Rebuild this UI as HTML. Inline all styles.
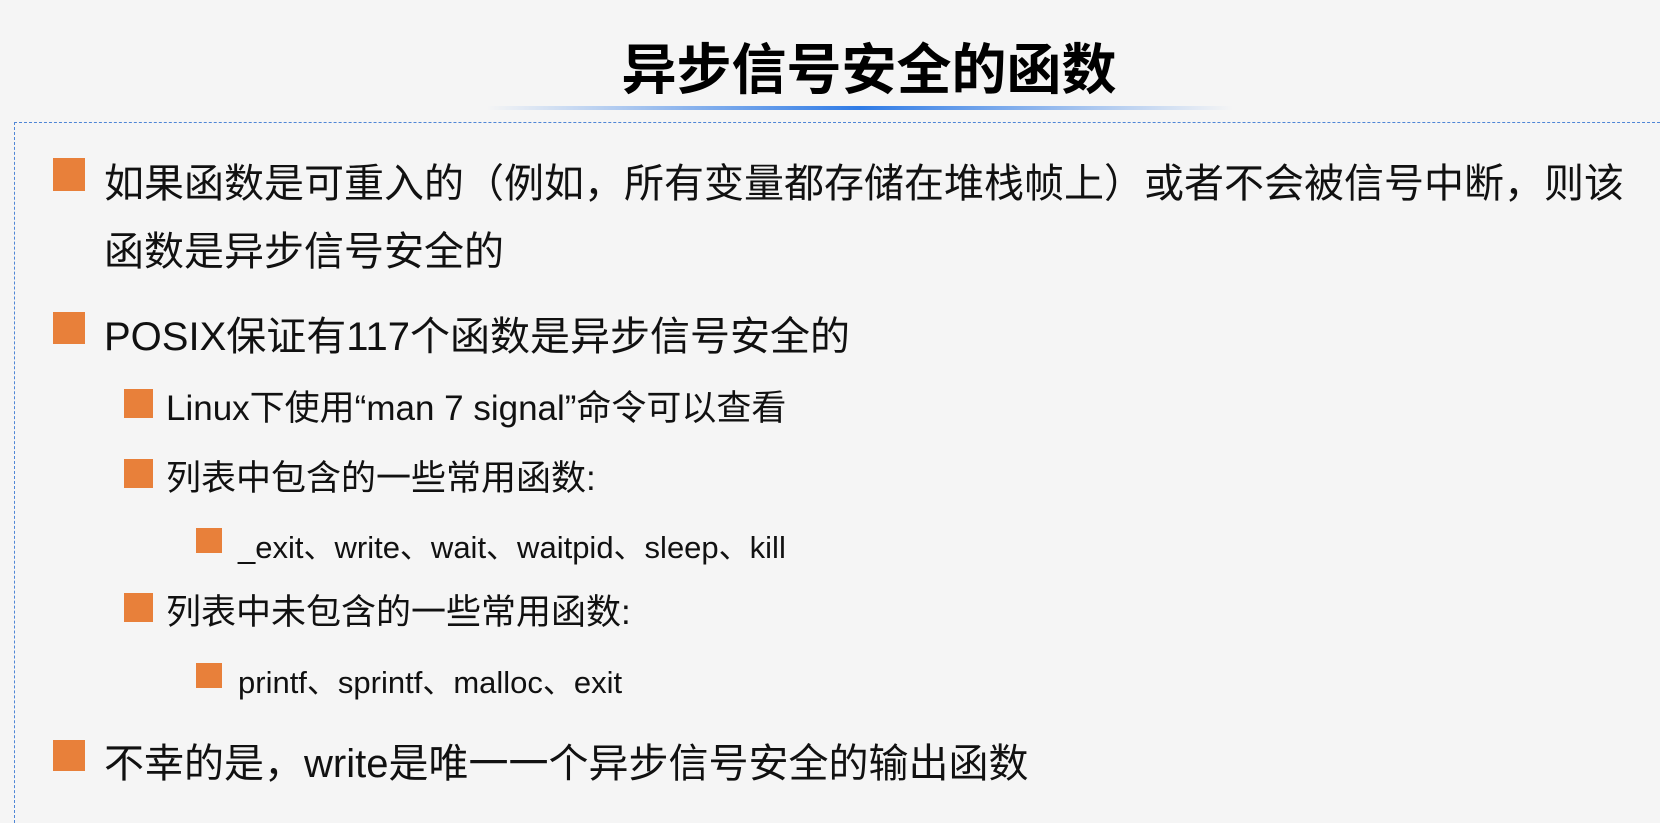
<!DOCTYPE html>
<html><head><meta charset="utf-8"><style>
html,body{margin:0;padding:0;}
body{width:1660px;height:804px;background:#f5f5f5;position:relative;overflow:hidden;font-family:"Liberation Sans","Noto Sans CJK SC",sans-serif;color:#111;}
.t{position:absolute;white-space:nowrap;}
.sq{position:absolute;background:#e8803a;}
</style></head><body>
<div class="t" style="left:0;width:1660px;text-align:center;top:38px;font-size:55px;line-height:64px;font-weight:bold;color:#000;padding-left:78px;box-sizing:border-box;">异步信号安全的函数</div>
<div style="position:absolute;left:487px;top:106px;width:746px;height:4px;background:linear-gradient(90deg,rgba(60,130,230,0),#2f7be6 50%,rgba(60,130,230,0));"></div>
<div style="position:absolute;left:14px;top:122px;width:1660px;height:700px;border-top:1.5px dashed #4f86d6;border-left:1.5px dashed #4f86d6;"></div>

<div class="sq" style="left:53px;top:158px;width:32px;height:33px;"></div>
<div class="t" style="left:104px;top:160px;font-size:40px;line-height:48px;">如果函数是可重入的（例如，所有变量都存储在堆栈帧上）或者不会被信号中断，则该</div>
<div class="t" style="left:104px;top:228px;font-size:40px;line-height:48px;">函数是异步信号安全的</div>

<div class="sq" style="left:53px;top:312px;width:32px;height:32px;"></div>
<div class="t" style="left:104px;top:313px;font-size:40px;line-height:48px;">POSIX保证有117个函数是异步信号安全的</div>

<div class="sq" style="left:124px;top:389px;width:29px;height:29px;"></div>
<div class="t" style="left:166px;top:388px;font-size:35px;line-height:42px;">Linux下使用“man 7 signal”命令可以查看</div>

<div class="sq" style="left:124px;top:459px;width:29px;height:29px;"></div>
<div class="t" style="left:166px;top:458px;font-size:35px;line-height:42px;">列表中包含的一些常用函数:</div>

<div class="sq" style="left:196px;top:528px;width:26px;height:25px;"></div>
<div class="t" style="left:238px;top:529px;font-size:31px;line-height:38px;">_exit、write、wait、waitpid、sleep、kill</div>

<div class="sq" style="left:124px;top:593px;width:29px;height:29px;"></div>
<div class="t" style="left:166px;top:592px;font-size:35px;line-height:42px;">列表中未包含的一些常用函数:</div>

<div class="sq" style="left:196px;top:663px;width:26px;height:25px;"></div>
<div class="t" style="left:238px;top:664px;font-size:31px;line-height:38px;">printf、sprintf、malloc、exit</div>

<div class="sq" style="left:53px;top:740px;width:32px;height:31px;"></div>
<div class="t" style="left:104px;top:740px;font-size:40px;line-height:48px;">不幸的是，write是唯一一个异步信号安全的输出函数</div>
</body></html>
